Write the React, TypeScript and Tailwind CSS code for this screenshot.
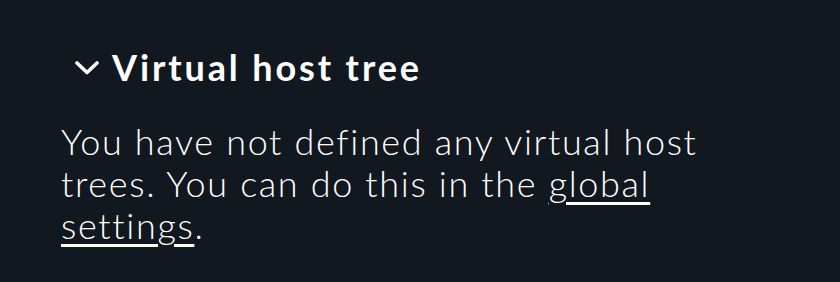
import React from "react";

export default function App() {
  return (
    <div className="w-[840px] h-[282px] bg-[#121820] text-white overflow-hidden" style={{ fontFamily: "Lato, sans-serif" }}>
      <div className="pt-[44px] pl-[61px] pr-[40px]">
        <div className="flex items-center h-[46px]">
          <svg width="24" height="14" viewBox="0 0 24 14" className="ml-[14px] mr-[13px] mt-[2px]" fill="none">
            <path d="M2 2 L12 11.5 L22 2" stroke="white" strokeWidth="3.6" strokeLinecap="round" strokeLinejoin="round" />
          </svg>
          <span className="font-bold text-[36px] leading-[46px] tracking-[0.08em]">Virtual host tree</span>
        </div>
        <p className="mt-[30px] text-[36px] leading-[42px] tracking-[1.65px] w-[680px] font-light">
          You have not defined any virtual host trees. You can do this in the{" "}
          <a className="underline underline-offset-[5px] decoration-[2.5px]">global settings</a>.
        </p>
      </div>
    </div>
  );
}
